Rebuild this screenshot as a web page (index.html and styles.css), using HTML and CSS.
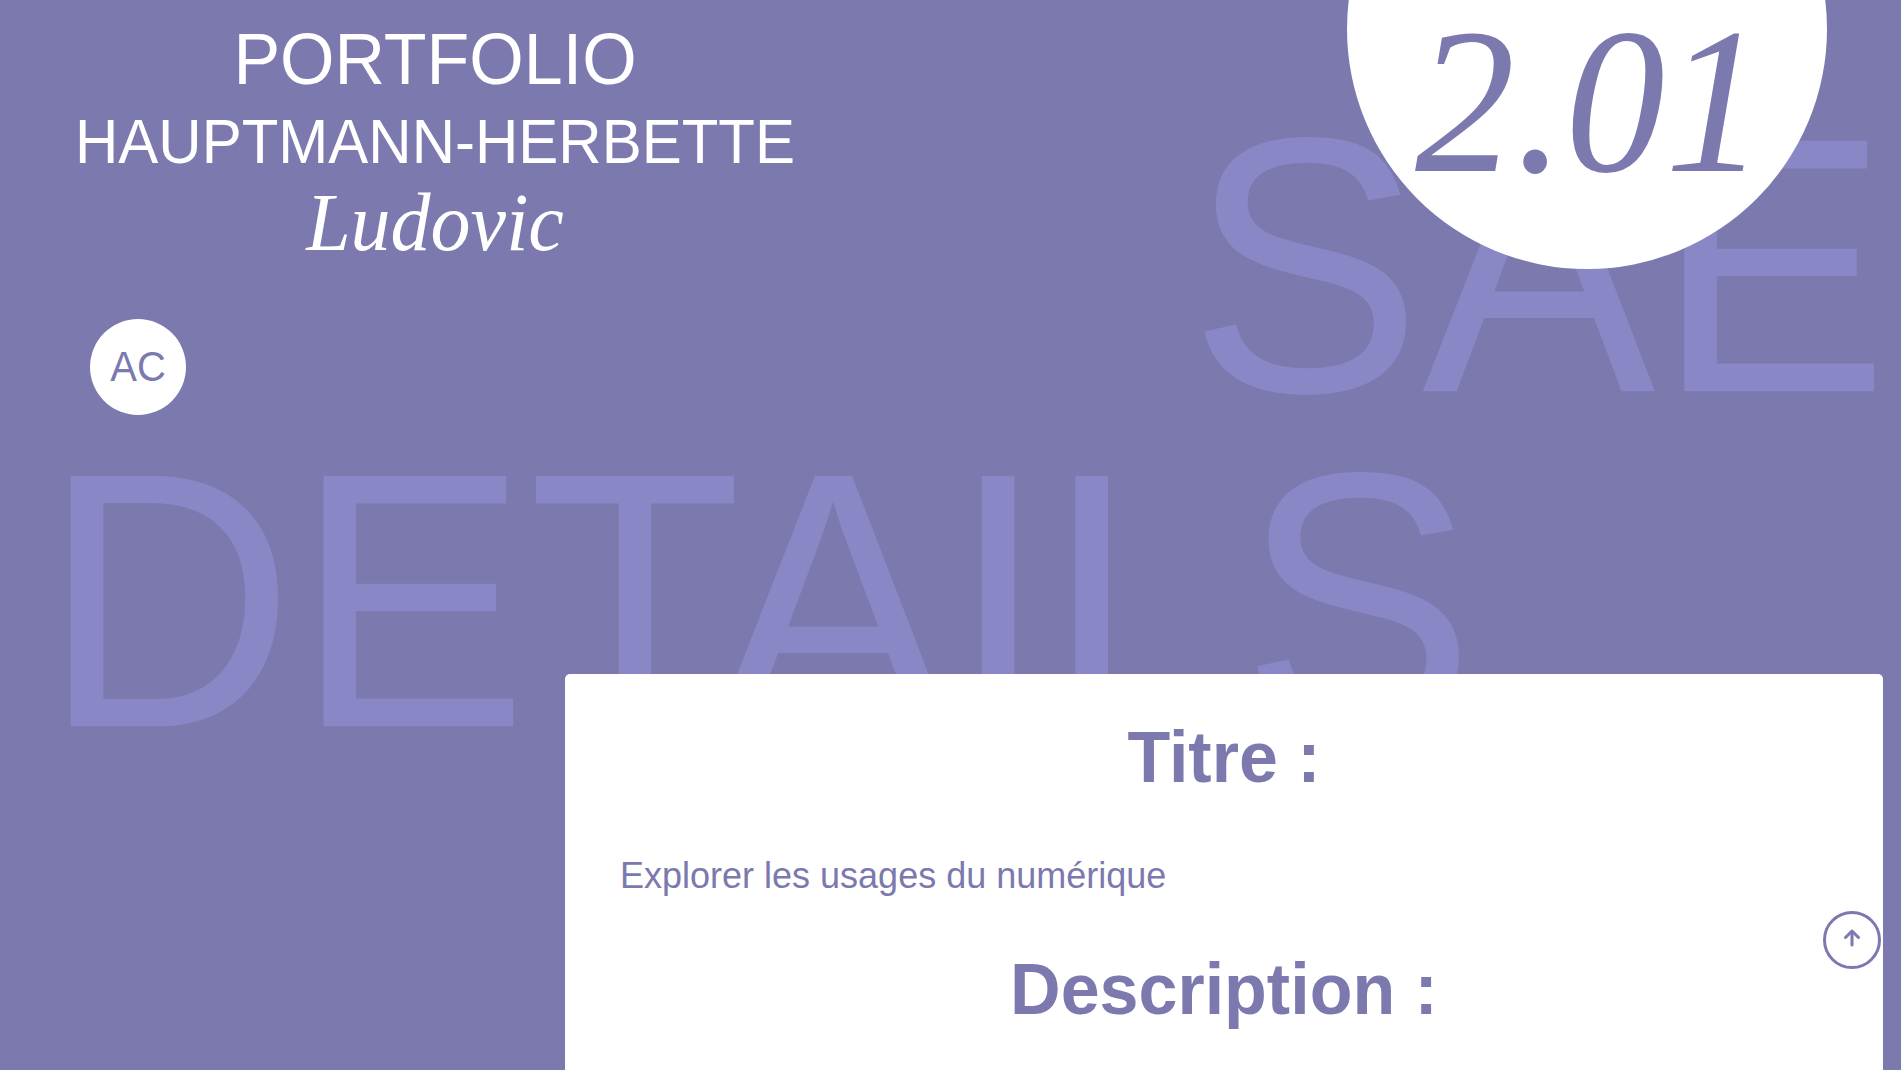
FILE: index.html
```html
<!DOCTYPE html>
<html lang="fr">
<head>
    <meta charset="UTF-8">
    <meta name="viewport" content="width=device-width, initial-scale=1.0">
    <title>Portfolio - SAE 2.01</title>
    <link rel="stylesheet" href="styles.css">
</head>
<body>
<div class="page">
    <!-- big words behind everything -->
    <div class="bg-words" aria-hidden="true">
        <div class="bg-sae">SAE</div>
        <div class="bg-details">DETAILS</div>
    </div>

    <header class="top">
        <div class="top-left">
            <div class="identity">
                <h1 class="name-portfolio tall">PORTFOLIO</h1>
                <h2 class="name-last tall">HAUPTMANN-HERBETTE</h2>
                <h2 class="name-first tall">Ludovic</h2>
            </div>
            <a class="badge" href="#"><span class="tall">AC</span></a>
        </div>
        <div class="version"><span class="tall">2.01</span></div>
    </header>

    <main class="card">
        <h2 class="card-title tall">Titre :</h2>
        <p class="card-text tall">Explorer les usages du numérique</p>
        <h2 class="card-title card-title-next tall">Description :</h2>
    </main>

    <a class="to-top" href="#" aria-label="Haut de page">
        <svg width="18" height="18" viewBox="0 0 18 18" fill="none" stroke="currentColor" stroke-width="3" stroke-linecap="round" stroke-linejoin="round">
            <path d="M9 16V3"/>
            <path d="M2.5 8.5L9 2L15.5 8.5"/>
        </svg>
    </a>
</div>
</body>
</html>
```
FILE: styles.css
```css
body {
    margin: 0;
    font-family: "Liberation Sans", Arial, sans-serif;
    background-color: #7b79ae;
}

h1, h2, p {
    margin: 0;
    font-weight: normal;
}

.page {
    position: relative;
    height: 1070px;
    overflow: hidden;
    color: #ffffff;
}

/* capitals are a bit taller in the design than in this font */
.tall {
    display: block;
    transform: scaleY(1.04);
    transform-origin: 50% 79%;
}

/* background words */
.bg-words {
    position: absolute;
    top: 0;
    left: 0;
    right: 0;
    font-size: 350px;
    line-height: 335px;
    color: #8a87c6;
}

.bg-sae {
    margin-top: 102px;
    margin-right: 12px;
    text-align: right;
    transform: scaleY(1.04);
    transform-origin: 0 283px;
}

.bg-details {
    margin-left: 42px;
    transform: scaleY(1.04);
    transform-origin: 0 283px;
}

/* header */
.top {
    position: relative;
    display: flex;
    justify-content: space-between;
    align-items: flex-start;
}

.top-left {
    width: 870px;
}

.identity {
    padding-top: 20px;
    text-align: center;
}

.name-portfolio {
    font-size: 70px;
    line-height: 80px;
}

.name-last {
    font-size: 60px;
    line-height: 69px;
    margin-top: 8px;
}

.name-first {
    font-family: "Liberation Serif", "Times New Roman", serif;
    font-style: italic;
    font-size: 80px;
    line-height: 92px;
}

.badge {
    display: flex;
    justify-content: center;
    align-items: center;
    width: 96px;
    height: 96px;
    margin-top: 50px;
    margin-left: 90px;
    border-radius: 50%;
    background-color: #ffffff;
    color: #7b79ae;
    font-size: 40px;
    text-decoration: none;
}

.version {
    display: flex;
    justify-content: center;
    align-items: flex-end;
    box-sizing: border-box;
    width: 480px;
    height: 480px;
    margin-top: -211px;
    margin-right: 74px;
    padding-left: 6px;
    padding-bottom: 50px;
    border-radius: 50%;
    background-color: #ffffff;
    color: #7b79ae;
    font-family: "Liberation Serif", "Times New Roman", serif;
    font-style: italic;
    font-size: 200px;
    line-height: 230px;
}

/* white card */
.card {
    position: relative;
    box-sizing: border-box;
    height: 420px;
    margin-top: 259px;
    margin-left: 565px;
    margin-right: 18px;
    padding: 44px 55px 0;
    background-color: #ffffff;
    border-radius: 5px;
    color: #7b79ae;
}

.card-title {
    font-size: 70px;
    font-weight: bold;
    line-height: 80px;
    text-align: center;
}

.card-title-next {
    margin-top: 54px;
}

.card-text {
    margin-top: 57px;
    font-size: 36px;
    line-height: 41px;
}

/* scroll button */
.to-top {
    position: fixed;
    top: 911px;
    right: 20px;
    display: flex;
    justify-content: center;
    align-items: center;
    box-sizing: border-box;
    width: 58px;
    height: 58px;
    padding-bottom: 5px;
    border: 3px solid #7b79ae;
    border-radius: 50%;
    color: #7b79ae;
}
```
